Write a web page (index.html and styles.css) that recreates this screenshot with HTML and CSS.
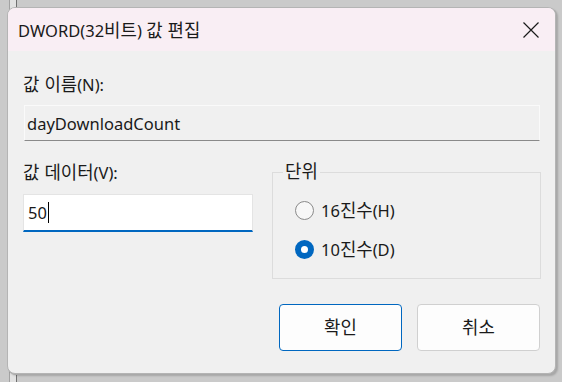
FILE: index.html
```html
<!DOCTYPE html>
<html lang="ko">
<head>
  <meta charset="UTF-8">
  <title>DWORD(32비트) 값 편집</title>
  <link rel="stylesheet" href="styles.css">
</head>
<body>
  <div class="window">
    <div class="titlebar">
      <span class="title">DWORD(32<span class="ko">비트</span>) <span class="ko">값 편집</span></span>
      <button class="close" aria-label="닫기">
        <svg width="16" height="16" viewBox="0 0 16 16">
          <path d="M0.5 0.5 L15.5 15.5 M15.5 0.5 L0.5 15.5" stroke="#1a1a1a" stroke-width="1.2" fill="none"/>
        </svg>
      </button>
    </div>
    <div class="content">
      <label class="label"><span class="ko">값 이름</span>(N):</label>
      <input class="name-input" type="text" value="dayDownloadCount" readonly>
      <div class="row">
        <div class="data-col">
          <label class="label"><span class="ko">값 데이터</span>(V):</label>
          <div class="data-input"><span>50</span><span class="caret"></span></div>
        </div>
        <fieldset class="unit">
          <legend><span class="ko">단위</span></legend>
          <label class="radio"><input type="radio" name="base"><span>16<span class="ko">진수</span>(H)</span></label>
          <label class="radio"><input type="radio" name="base" checked><span>10<span class="ko">진수</span>(D)</span></label>
        </fieldset>
      </div>
      <div class="buttons">
        <button class="btn primary"><span class="ko">확인</span></button>
        <button class="btn"><span class="ko">취소</span></button>
      </div>
    </div>
  </div>
</body>
</html>
```

FILE: styles.css
```css
body {
  margin: 0;
  height: 382px;
  overflow: hidden;
  padding: 7px 0 0 7px;
  box-sizing: border-box;
  font-family: "Noto Sans", "Noto Sans CJK KR", sans-serif;
  color: #1a1a1a;
  background:
    linear-gradient(to right, transparent 9px, #a2a2a2 9px, #a2a2a2 10px, #e2e2e2 10px, #e2e2e2 16px, #707070 16px, #707070 17px, transparent 17px),
    #cacaca;
}
.ko {
  font-family: "Noto Sans CJK KR", sans-serif;
  font-size: 1.08em;
  line-height: 1;
}
.window {
  width: 549px;
  height: 367px;
  box-sizing: border-box;
  border: 1px solid #b4b4b4;
  border-radius: 8px;
  background: #f0f0f0;
  overflow: hidden;
  box-shadow: 1px 1px 0 #a9a9a9, 2px 2px 2px rgba(0,0,0,0.18);
}
.titlebar {
  height: 43px;
  background: #f9eef4;
  display: flex;
  align-items: center;
  justify-content: space-between;
  padding: 0 0 0 10px;
}
.title {
  font-size: 16.5px;
  margin-top: 1px;
}
.close {
  border: 0;
  background: none;
  width: 46px;
  height: 43px;
  padding: 0 16px 0 0;
  display: flex;
  align-items: center;
  justify-content: flex-end;
  box-sizing: border-box;
}
.content {
  padding: 23px 15px 0 15px;
}
.label {
  display: block;
  font-size: 16.5px;
  line-height: 22px;
}
.name-input {
  display: block;
  box-sizing: border-box;
  width: 516px;
  height: 36px;
  margin: 9px 0 0 1px;
  padding: 0 2px;
  font: inherit;
  font-size: 16.5px;
  color: #1a1a1a;
  background: #f0f0f0;
  border: 1px solid #fafafa;
  border-bottom-color: #8a8a8a;
  outline: none;
}
.row {
  display: grid;
  grid-template-columns: 230px 269px;
  column-gap: 19px;
  margin-top: 21px;
}
.data-input {
  box-sizing: border-box;
  height: 38px;
  margin-top: 10px;
  background: #fff;
  border: 1px solid #e4e4e4;
  border-bottom: 2px solid #0067c0;
  display: flex;
  align-items: center;
  padding: 0 4px;
  font-size: 16.5px;
}
.caret {
  width: 1px;
  height: 21px;
  background: #000;
  margin-left: 1px;
}
.unit {
  margin: 0;
  padding: 9px 10px 0 22px;
  height: 117px;
  box-sizing: border-box;
  border: 1px solid #dcdcdc;
}
.unit legend {
  font-size: 16.5px;
  line-height: 20px;
  padding: 0 2px;
  margin-left: -12px;
}
.radio {
  display: flex;
  align-items: center;
  gap: 7px;
  font-size: 16.5px;
  height: 39px;
}
.radio input {
  appearance: none;
  margin: 0;
  width: 19px;
  height: 19px;
  border-radius: 50%;
  border: 1px solid #8a8a8a;
  background: #f7f7f7;
  box-sizing: border-box;
}
.radio input:checked {
  border: 6px solid #0067c0;
  background: #fff;
}
.buttons {
  display: flex;
  justify-content: flex-end;
  gap: 15px;
  margin-top: 25px;
}
.btn {
  width: 123px;
  height: 47px;
  box-sizing: border-box;
  border: 1px solid #d0d0d0;
  border-radius: 4px;
  background: #fdfdfd;
  font-family: "Noto Sans", "Noto Sans CJK KR", sans-serif;
  font-size: 16.5px;
  color: #1a1a1a;
}
.btn.primary {
  border-color: #0067c0;
}
```
